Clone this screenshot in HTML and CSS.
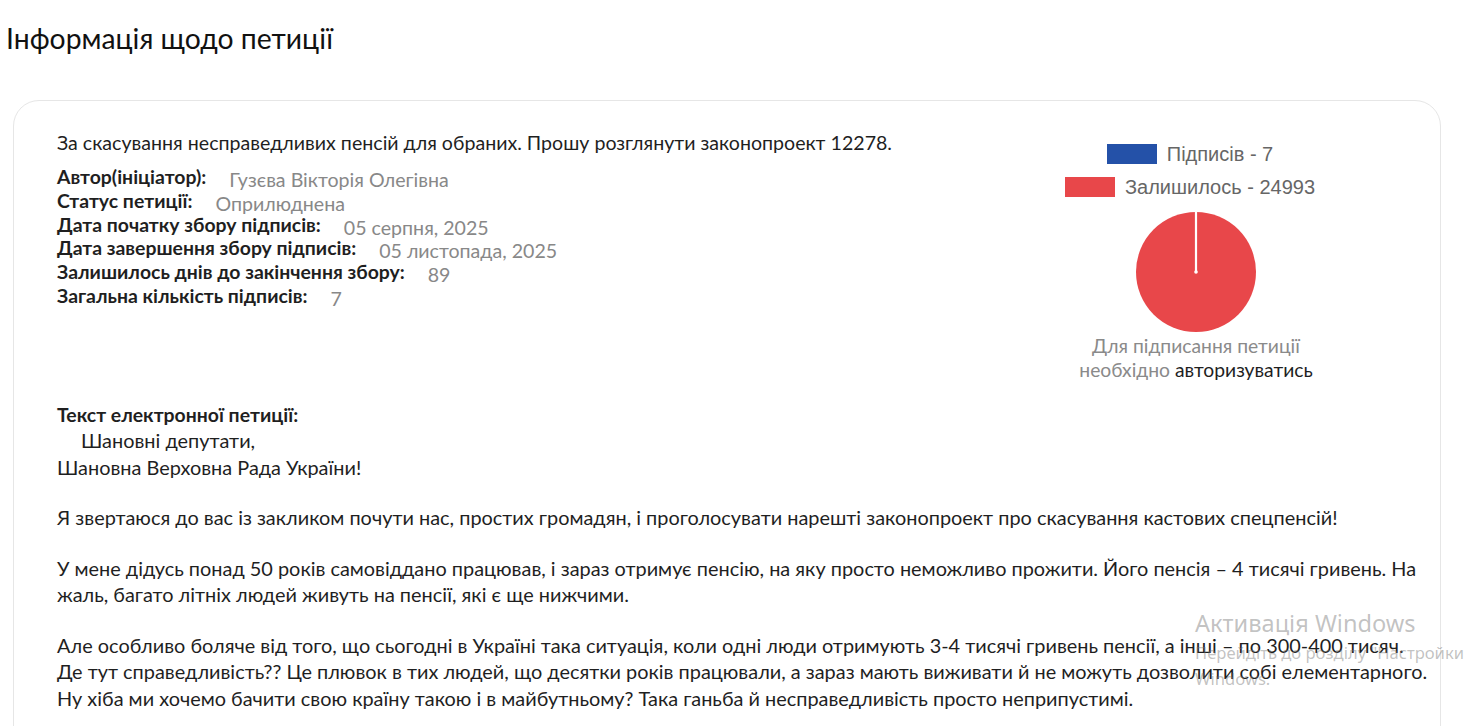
FILE: index.html
```html
<!DOCTYPE html>
<html lang="uk">
<head>
<meta charset="utf-8">
<title>Інформація щодо петиції</title>
<link rel="stylesheet" href="styles.css">
</head>
<body>
<h1 class="page-title">Інформація щодо петиції</h1>
<div class="card">
  <div class="top">
    <div class="info">
      <p class="petition-name">За скасування несправедливих пенсій для обраних. Прошу розглянути законопроект 12278.</p>
      <div class="row"><span class="label">Автор(ініціатор):</span><span class="value">Гузєва Вікторія Олегівна</span></div>
      <div class="row"><span class="label">Статус петиції:</span><span class="value">Оприлюднена</span></div>
      <div class="row"><span class="label">Дата початку збору підписів:</span><span class="value">05 серпня, 2025</span></div>
      <div class="row"><span class="label">Дата завершення збору підписів:</span><span class="value">05 листопада, 2025</span></div>
      <div class="row"><span class="label">Залишилось днів до закінчення збору:</span><span class="value">89</span></div>
      <div class="row"><span class="label">Загальна кількість підписів:</span><span class="value">7</span></div>
    </div>
    <div class="chart">
      <div class="legend">
        <div class="legend-item"><span class="swatch swatch-blue"></span><span>Підписів - 7</span></div>
        <div class="legend-item"><span class="swatch swatch-red"></span><span>Залишилось - 24993</span></div>
      </div>
      <svg class="pie" width="122" height="122" viewBox="0 0 122 122">
        <circle cx="61" cy="61" r="60" fill="#e8474a"/>
        <line x1="61" y1="1" x2="61" y2="61" stroke="#fff" stroke-width="2.2" stroke-linecap="round"/>
        <circle cx="61" cy="61" r="1.8" fill="#fff"/>
      </svg>
      <p class="sign-note">Для підписання петиції<br>необхідно <a class="auth-link" href="#">авторизуватись</a></p>
    </div>
  </div>
  <div class="petition-text">
    <div class="label">Текст електронної петиції:</div>
    <p class="para"><span class="indent">Шановні депутати,</span><br>Шановна Верховна Рада України!</p>
    <p class="para">Я звертаюся до вас із закликом почути нас, простих громадян, і проголосувати нарешті законопроект про скасування кастових спецпенсій!</p>
    <p class="para">У мене дідусь понад 50 років самовіддано працював, і зараз отримує пенсію, на яку просто неможливо прожити. Його пенсія – 4 тисячі гривень. На жаль, багато літніх людей живуть на пенсії, які є ще нижчими.</p>
    <p class="para">Але особливо боляче від того, що сьогодні в Україні така ситуація, коли одні люди отримують 3-4 тисячі гривень пенсії, а інші – по 300-400 тисяч. Де тут справедливість?? Це плювок в тих людей, що десятки років працювали, а зараз мають виживати й не можуть дозволити собі елементарного. Ну хіба ми хочемо бачити свою країну такою і в майбутньому? Така ганьба й несправедливість просто неприпустимі.</p>
  </div>
</div>
<div class="watermark">
  <div class="wm-title">Активація Windows</div>
  <div class="wm-sub">Перейдіть до розділу "Настройки"<br>Windows.</div>
</div>
</body>
</html>
```

FILE: styles.css
```css
html, body {
  margin: 0;
  padding: 0;
  background: #fff;
  overflow: hidden;
}
body {
  font-family: Lato, "Noto Sans", sans-serif;
  color: #1f1f1f;
  width: 1464px;
  height: 726px;
  position: relative;
}
.page-title {
  font-size: 28.3px;
  font-weight: 400;
  margin: 0;
  padding: 21px 0 0 6px;
  line-height: 34px;
  color: #111;
}
.card {
  margin: 45px 23px 0 13px;
  border: 1px solid #e6e6e6;
  border-radius: 26px;
  padding: 29px 0 0 43px;
  height: 700px;
}
.top {
  display: flex;
  align-items: flex-start;
}
.info {
  flex: 1;
}
.petition-name {
  margin: 0 0 9px;
  font-size: 19.6px;
  line-height: 26px;
}
.row {
  display: flex;
  align-items: baseline;
  line-height: 23.8px;
}
.label {
  font-weight: 700;
  font-size: 19.4px;
}
.value {
  color: #888;
  font-size: 19.6px;
  margin-left: 23px;
  position: relative;
  top: 3px;
}
.chart {
  width: 300px;
  margin-right: 94px;
  display: flex;
  flex-direction: column;
  align-items: center;
  padding-top: 14px;
}
.legend {
  display: flex;
  flex-direction: column;
  align-items: center;
  font-family: "Liberation Sans", Arial, sans-serif;
  font-size: 20px;
  color: #666;
  gap: 13px;
  margin-left: -12px;
}
.legend-item {
  display: flex;
  align-items: center;
  gap: 10px;
  height: 20px;
}
.swatch {
  width: 50px;
  height: 20px;
  display: inline-block;
}
.swatch-blue {
  background: #2451a8;
}
.swatch-red {
  background: #e8474a;
}
.pie {
  display: block;
  margin-top: 14px;
}
.sign-note {
  margin: 1px 0 0;
  text-align: center;
  color: #8a8a8a;
  font-size: 19.3px;
  line-height: 24px;
}
.auth-link {
  color: #1f1f1f;
  text-decoration: none;
}
.petition-text {
  margin-top: 21px;
  font-size: 19.9px;
  padding-right: 10px;
}
.petition-text .label {
  line-height: 24px;
}
.para {
  margin: 0 0 24px;
  line-height: 26.5px;
}
.indent {
  padding-left: 24px;
}
.watermark {
  position: absolute;
  left: 1195px;
  top: 607px;
  color: rgba(120, 120, 120, 0.45);
  font-family: "Noto Sans", "Open Sans", sans-serif;
  white-space: nowrap;
  pointer-events: none;
}
.wm-title {
  font-size: 23.6px;
  line-height: 32px;
}
.wm-sub {
  font-size: 16.6px;
  line-height: 26px;
  margin-top: 1px;
}
```
